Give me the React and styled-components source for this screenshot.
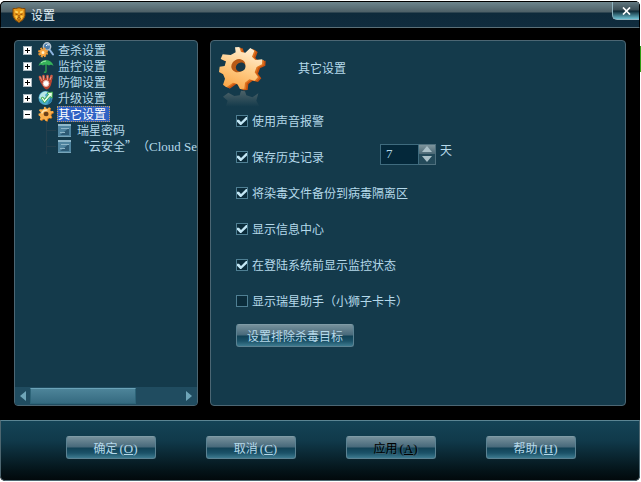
import React, { useState } from "react";
import styled, { createGlobalStyle } from "styled-components";

const groups = [
  { id: "scan", title: "查杀设置", icon: <ScanIcon /> },
  { id: "monitor", title: "监控设置", icon: <UmbrellaIcon /> },
  { id: "defense", title: "防御设置", icon: <HandIcon /> },
  { id: "update", title: "升级设置", icon: <UpdateIcon /> },
  { id: "other", title: "其它设置", icon: <SmallGear />, open: true },
];

const startOptions = [
  { id: "sound", label: "使用声音报警", checked: true },
  { id: "history", label: "保存历史记录", checked: true },
  { id: "backup", label: "将染毒文件备份到病毒隔离区", checked: true },
  { id: "center", label: "显示信息中心", checked: true },
  { id: "login", label: "在登陆系统前显示监控状态", checked: true },
  { id: "lion", label: "显示瑞星助手（小狮子卡卡）", checked: false },
];

const actions = [
  { label: "确定", hotkey: "O" },
  { label: "取消", hotkey: "C" },
  { label: "应用", hotkey: "A", disabled: true },
  { label: "帮助", hotkey: "H" },
];

export default function App() {
  const [options, setOptions] = useState(startOptions);
  const [days, setDays] = useState("7");

  const toggle = (id) => {
    setOptions(
      options.map((option) =>
        option.id === id ? { ...option, checked: !option.checked } : option
      )
    );
  };

  const step = (amount) => {
    setDays(String(Math.max(1, (Number(days) || 0) + amount)));
  };

  return (
    <>
      <GlobalStyle />
      <Dialog>
        <TitleBar>
          <LionIcon />
          <WindowTitle>设置</WindowTitle>
          <CloseButton aria-label="关闭">
            <svg width="9" height="8" viewBox="0 0 9 8">
              <path d="M1 0.5L8 7.5M8 0.5L1 7.5" stroke="#fff" strokeWidth="1.7" />
            </svg>
          </CloseButton>
        </TitleBar>

        <Body>
          <SidePanel>
            <Tree>
              {groups.map((group) => (
                <li key={group.id}>
                  <TreeRow>
                    <Expander aria-label={group.title} aria-expanded={!!group.open}>
                      <svg width="5" height="5" viewBox="0 0 5 5">
                        <path
                          d={group.open ? "M0 2.5H5" : "M0 2.5H5M2.5 0V5"}
                          stroke="#000"
                        />
                      </svg>
                    </Expander>
                    {group.icon}
                    <TreeLabel $selected={group.open}>{group.title}</TreeLabel>
                  </TreeRow>
                  {group.open && (
                    <Branch>
                      <TreeRow as="li">
                        <Connector />
                        <PageIcon />
                        <ChildLabel>瑞星密码</ChildLabel>
                      </TreeRow>
                      <TreeRow as="li">
                        <Connector />
                        <PageIcon />
                        <ChildLabel>
                          “云安全”（<Latin>Cloud Se</Latin>
                        </ChildLabel>
                      </TreeRow>
                    </Branch>
                  )}
                </li>
              ))}
            </Tree>
            <ScrollBar>
              <ScrollArrow aria-label="向左">
                <svg width="6" height="10" viewBox="0 0 6 10">
                  <path d="M6 0V10L0 5Z" fill="#6fa5b8" />
                </svg>
              </ScrollArrow>
              <ScrollTrack>
                <ScrollThumb />
              </ScrollTrack>
              <ScrollArrow aria-label="向右">
                <svg width="6" height="10" viewBox="0 0 6 10">
                  <path d="M0 0V10L6 5Z" fill="#6fa5b8" />
                </svg>
              </ScrollArrow>
            </ScrollBar>
          </SidePanel>

          <MainPanel>
            <Header>
              <BigGear />
              <Heading>其它设置</Heading>
            </Header>
            <Options>
              {options.map((option) => (
                <OptionRow key={option.id}>
                  <OptionLabel>
                    <CheckBox
                      type="checkbox"
                      checked={option.checked}
                      onChange={() => toggle(option.id)}
                    />
                    {option.label}
                  </OptionLabel>
                  {option.id === "history" && (
                    <DaysField>
                      <DaysInput
                        id="days"
                        type="text"
                        value={days}
                        onChange={(event) => setDays(event.target.value)}
                      />
                      <Spinner>
                        <SpinButton aria-label="增加" onClick={() => step(1)}>
                          <svg width="10" height="6" viewBox="0 0 10 6">
                            <path d="M0 6H10L5 0Z" fill="#a9bfc7" />
                          </svg>
                        </SpinButton>
                        <SpinButton aria-label="减少" onClick={() => step(-1)}>
                          <svg width="10" height="6" viewBox="0 0 10 6">
                            <path d="M0 0H10L5 6Z" fill="#a9bfc7" />
                          </svg>
                        </SpinButton>
                      </Spinner>
                      <Unit htmlFor="days">天</Unit>
                    </DaysField>
                  )}
                </OptionRow>
              ))}
              <WideButton>设置排除杀毒目标</WideButton>
            </Options>
          </MainPanel>
        </Body>

        <Footer>
          {actions.map((action) => (
            <ActionButton key={action.hotkey} disabled={action.disabled}>
              {action.label}
              <Latin>
                (<u>{action.hotkey}</u>)
              </Latin>
            </ActionButton>
          ))}
        </Footer>
      </Dialog>
    </>
  );
}

function LionIcon() {
  return (
    <svg width="14" height="16" viewBox="0 0 14 16">
      <path d="M1 1.500L3.500 1.500Q7 0 10.500 1.500L13 1.500V9Q12 13 7 15.500Q2 13 1 9Z" fill="#e8981a" stroke="#7d4708" />
      <path d="M3 3.500L6 4.500V6L3.500 6ZM11 3.500L8 4.500V6L10.500 6Z" fill="#ffd45c" />
      <path d="M3 9L5 8.500L6 11L4.500 12ZM11 9L9 8.500L8 11L9.500 12Z" fill="#ffcc48" />
      <path d="M3.500 7L5.500 7.500M10.500 7L8.500 7.500M5 11.500L7 10.500L9 11.500M5.500 13H8.500" stroke="#7a3c06" strokeWidth="0.900" fill="none" />
      <path d="M6 8.500H8L7 10Z" fill="#6b3305" />
    </svg>
  );
}

function ScanIcon() {
  return (
    <svg width="16" height="16" viewBox="0 0 16 16">
      <path d="M11.500 7.500L15 12.500" stroke="#8fb4e0" strokeWidth="2" strokeLinecap="round" />
      <circle cx="9" cy="4.500" r="3.700" fill="#4d7fae" stroke="#b4c4d0" strokeWidth="1.400" />
      <path d="M8 4Q9 2 11.500 3" stroke="#fff" fill="none" />
      <circle cx="5" cy="10.500" r="4" fill="none" stroke="#f39a34" strokeWidth="2" strokeDasharray="2 1.140" />
      <circle cx="5" cy="10.500" r="2.500" fill="#fff0c8" stroke="#f7a540" strokeWidth="2" />
    </svg>
  );
}

function UmbrellaIcon() {
  return (
    <svg width="16" height="16" viewBox="0 0 16 16">
      <path d="M8 5V13Q8 15 6 14" stroke="#2c9b4e" strokeWidth="1.500" fill="none" />
      <path d="M0.500 8Q2 2.500 8 2Q14 2.500 15.500 8Q13 6 11 7.500Q8 5.500 5 7.500Q3 6 0.500 8Z" fill="#36b35a" />
      <path d="M3 5Q5 3 8 3" stroke="#a7ecb4" fill="none" />
    </svg>
  );
}

function HandIcon() {
  return (
    <svg width="16" height="16" viewBox="0 0 16 16">
      <path d="M2 3L4 8M5.500 2L6 8M9.500 2V8M13.500 2L12 8" stroke="#cf5d46" strokeWidth="2.600" strokeLinecap="round" />
      <path d="M1 5Q8 4 14.500 4L13 11Q11 15.500 8 15.500Q5 14 1 5Z" fill="#b8432f" />
      <path d="M2 3L4 7M5.500 2V6M9.500 2V6M13 3L12 6" stroke="#f0a694" strokeWidth="0.800" />
      <circle cx="8" cy="9.500" r="3" fill="#fff" stroke="#e6b3a5" />
    </svg>
  );
}

function UpdateIcon() {
  return (
    <svg width="16" height="16" viewBox="0 0 16 16">
      <circle cx="7.500" cy="8" r="7" fill="#4aa9c9" />
      <path d="M2 5Q5 0 10 2L7 5L8 7L4 10L1 8Z" fill="#b7e7e6" />
      <path d="M9 15L14 11L13 7Z" fill="#2b79a5" />
      <path d="M3 8L6.500 13L12 6.500L14 8L14.500 2L9 3L10.500 4.500L6.500 9.500L5 7Z" fill="#e9ffe4" stroke="#38a646" strokeWidth="0.900" />
    </svg>
  );
}

function PageIcon() {
  return (
    <svg width="13" height="13" viewBox="0 0 13 13">
      <path d="M0 0H13V13H0Z" fill="#4f849f" />
      <path d="M0 0H13V2H0Z" fill="#8fb8ca" />
      <path d="M2 11L11 4V11Z" fill="#2d5a74" />
      <path d="M3 4.500H11M2 8.500H7" stroke="#8db5c7" />
      <path d="M0 12.500H13" stroke="#78a4b8" />
    </svg>
  );
}

const gearTeeth =
  "M48 4L61 3L66 18L79 20L94 6L106 14L99 32L109 42L130 40L129 55L113 63L107 79L117 93L107 104L91 100L78 110L76 128L63 129L55 114L42 110L22 124L12 116L18 98L12 84L0 78L2 62L17 60L21 46L5 39L11 25L35 27L50 19Z";

function SmallGear() {
  return (
    <svg width="16" height="16" viewBox="-4 -2 142 138">
      <path d={gearTeeth} fill="#d9791b" transform="translate(7 5)" />
      <path d={gearTeeth} fill="#fbb04c" />
      <path d="M30 62Q40 30 80 32" stroke="#ffe3ad" strokeWidth="14" fill="none" />
      <ellipse cx="68" cy="68" rx="22" ry="20" fill="#6b401a" />
    </svg>
  );
}

function BigGear() {
  return (
    <svg width="48" height="64" viewBox="0 0 144 192">
      <defs>
        <linearGradient id="gold" x1="0.700" y1="0" x2="0.300" y2="1">
          <stop offset="0" stopColor="#fff0d8" />
          <stop offset="0.500" stopColor="#ffcd88" />
          <stop offset="1" stopColor="#fba748" />
        </linearGradient>
        <linearGradient id="shade" x1="0" y1="0" x2="0" y2="1">
          <stop offset="0" stopColor="#7b8380" stopOpacity="0.550" />
          <stop offset="1" stopColor="#7b8380" stopOpacity="0" />
        </linearGradient>
      </defs>
      <path d="M12 152L28 140L46 150L62 148L66 134L78 136L82 148L100 154L118 142L112 164L122 182H20L26 164Z" fill="url(#shade)" />
      <path d={gearTeeth} fill="#c9520f" transform="translate(10 4)" />
      <path d={gearTeeth} fill="#dd7420" transform="translate(5 2)" />
      <path d={gearTeeth} fill="url(#gold)" />
      <ellipse cx="58" cy="59" rx="22" ry="19" fill="#b85a16" transform="rotate(-30 58 59)" />
      <ellipse cx="65" cy="63" rx="15" ry="13" fill="#173848" transform="rotate(-30 65 63)" />
    </svg>
  );
}

const GlobalStyle = createGlobalStyle`
  * {
    box-sizing: border-box;
  }
  body {
    margin: 0;
    padding: 1px 1px 1px 0;
    background: linear-gradient(#2f9e12, #2f9e12) right 46px / 1px 26px no-repeat #fff;
    color: #b5d9ea;
    font-family: "Noto Sans CJK SC", sans-serif;
    font-size: 12px;
    line-height: 16px;
    text-spacing-trim: space-all;
  }
  button,
  input {
    margin: 0;
    padding: 0;
    color: inherit;
    font: inherit;
  }
  svg {
    display: block;
    flex: none;
  }
`;

const Dialog = styled.main`
  display: flex;
  flex-direction: column;
  min-height: calc(100vh - 2px);
  background: #000;
  border-radius: 5px;
  overflow: hidden;
`;

const TitleBar = styled.header`
  display: flex;
  align-items: center;
  gap: 5px;
  height: 27px;
  padding-left: 11px;
  border: 1px solid #000;
  border-bottom: 1px solid #5b7079;
  border-radius: 5px 5px 0 0;
  background: linear-gradient(#6d858d 0, #4e6067 10px, #0e2a3b 11px, #102c3e 100%);
`;

const WindowTitle = styled.h1`
  margin: 0;
  color: #e4f1f7;
  font-size: 12px;
  font-weight: normal;
`;

const CloseButton = styled.button`
  display: flex;
  align-items: center;
  justify-content: center;
  align-self: flex-start;
  width: 27px;
  height: 18px;
  margin-left: auto;
  border: 1px solid #8fb3bf;
  border-top: 0;
  border-right: 0;
  border-radius: 0 0 0 5px;
  background: linear-gradient(#627880 0, #3a4d55 8px, #0c2733 9px, #6cc0d2 100%);
`;

const Body = styled.div`
  display: grid;
  grid-template-columns: 184px 1fr;
  gap: 12px;
  flex: 1;
  padding: 12px 14px 14px;
`;

const Panel = styled.section`
  display: flex;
  flex-direction: column;
  min-width: 0;
  border: 1px solid #4c6673;
  border-radius: 4px;
  background: #143a4b;
  overflow: hidden;
`;

const SidePanel = styled(Panel)`
  justify-content: space-between;
`;

const MainPanel = styled(Panel)`
  padding: 5px 8px;
`;

const Tree = styled.ul`
  margin: 0;
  padding: 1px 0 0 8px;
  list-style: none;
`;

const TreeRow = styled.div`
  display: flex;
  align-items: center;
  height: 16px;
  white-space: nowrap;
`;

const Expander = styled.button`
  display: flex;
  align-items: center;
  justify-content: center;
  width: 9px;
  height: 9px;
  margin-right: 6px;
  border: 1px solid #a9b8c0;
  background: #fff;
`;

const TreeLabel = styled.span`
  margin-left: 3px;
  padding: 0 4px 0 1px;
  outline: ${({ $selected }) => ($selected ? "1px dotted #c49a5a" : "none")};
  outline-offset: -1px;
  background: ${({ $selected }) => ($selected ? "#2f62c4" : "none")};
  color: ${({ $selected }) => ($selected ? "#fff" : "inherit")};
`;

const Branch = styled.ul`
  margin: 0;
  padding: 0 0 0 23px;
  list-style: none;
`;

const Connector = styled.span`
  flex: none;
  width: 12px;
  height: 16px;
  background:
    linear-gradient(#24404e, #24404e) 0 0 / 1px 100% no-repeat,
    linear-gradient(#24404e, #24404e) 0 8px / 10px 1px no-repeat;
`;

const ChildLabel = styled.span`
  margin-left: 6px;
`;

const Latin = styled.span`
  font-family: "Liberation Serif", serif;
  font-size: 13px;
  line-height: 12px;
`;

const ScrollBar = styled.div`
  display: flex;
  height: 18px;
  padding: 0 1px;
  background: #204c60;
`;

const ScrollArrow = styled.button`
  display: flex;
  align-items: center;
  justify-content: center;
  width: 14px;
  border: 0;
  background: none;
`;

const ScrollTrack = styled.div`
  flex: 1;
  padding: 1px 0;
`;

const ScrollThumb = styled.div`
  width: 70%;
  height: 16px;
  border: 1px solid #2d6478;
  border-top-color: #6ba3b8;
  background: linear-gradient(#4d8499, #356a80);
`;

const Header = styled.div`
  display: flex;
  gap: 31px;
  height: 57px;
`;

const Heading = styled.h2`
  margin: 14px 0 0;
  font-size: 12px;
  font-weight: normal;
`;

const Options = styled.div`
  padding-left: 17px;
`;

const OptionRow = styled.div`
  display: flex;
  align-items: center;
  height: 36px;
`;

const OptionLabel = styled.label`
  display: flex;
  align-items: center;
  gap: 4px;
`;

const CheckBox = styled.input`
  display: grid;
  place-content: center;
  width: 12px;
  height: 12px;
  border: 1px solid #4f7f93;
  background: #0b2c3b;
  appearance: none;

  &:checked::before {
    content: "";
    width: 10px;
    height: 8px;
    background: #c3e6f4;
    clip-path: polygon(0 35%, 20% 35%, 40% 62%, 90% 0, 100% 0, 100% 30%, 42% 100%, 32% 100%, 0 60%);
  }
`;

const DaysField = styled.div`
  display: flex;
  align-items: center;
  margin: -6px 0 0 56px;
`;

const DaysInput = styled.input`
  width: 39px;
  height: 21px;
  padding-left: 5px;
  border: 1px solid #3f6b7e;
  background: #04283a;
  font-family: "Liberation Serif", serif;
  font-size: 13px;
`;

const Spinner = styled.div`
  display: grid;
  width: 17px;
  height: 21px;
  border: 1px solid #4f707e;
  border-left: 0;
`;

const SpinButton = styled.button`
  display: flex;
  align-items: center;
  justify-content: center;
  border: 0;
  background: linear-gradient(#7e949c, #4b6875);

  & + & {
    background: #244a5a;
  }
`;

const Unit = styled.label`
  margin: -8px 0 0 4px;
`;

const GlossyButton = styled.button`
  height: 23px;
  border: 1px solid #5b8292;
  border-top-color: #7f9ba6;
  border-radius: 3px;
  background: linear-gradient(#76909b 0, #47697a 10px, #114256 11px, #1b5268 16px, #3d7a8f 100%);
`;

const WideButton = styled(GlossyButton)`
  width: 118px;
  margin-top: 5px;
`;

const ActionButton = styled(GlossyButton)`
  width: 90px;
  padding-left: 9px;

  &:disabled {
    color: #000;
    text-shadow: 1px 1px 0 #3c6474;
  }

  ${Latin} {
    margin-left: 2px;
  }
`;

const Footer = styled.footer`
  display: flex;
  justify-content: center;
  gap: 50px;
  height: 61px;
  padding: 15px 0 0 2px;
  border: 1px solid #4d6670;
  border-top-color: #5b8593;
  border-radius: 0 0 5px 5px;
  background: linear-gradient(#144356 0, #10394a 20px, #041318 50px, #02090c 100%);
`;
